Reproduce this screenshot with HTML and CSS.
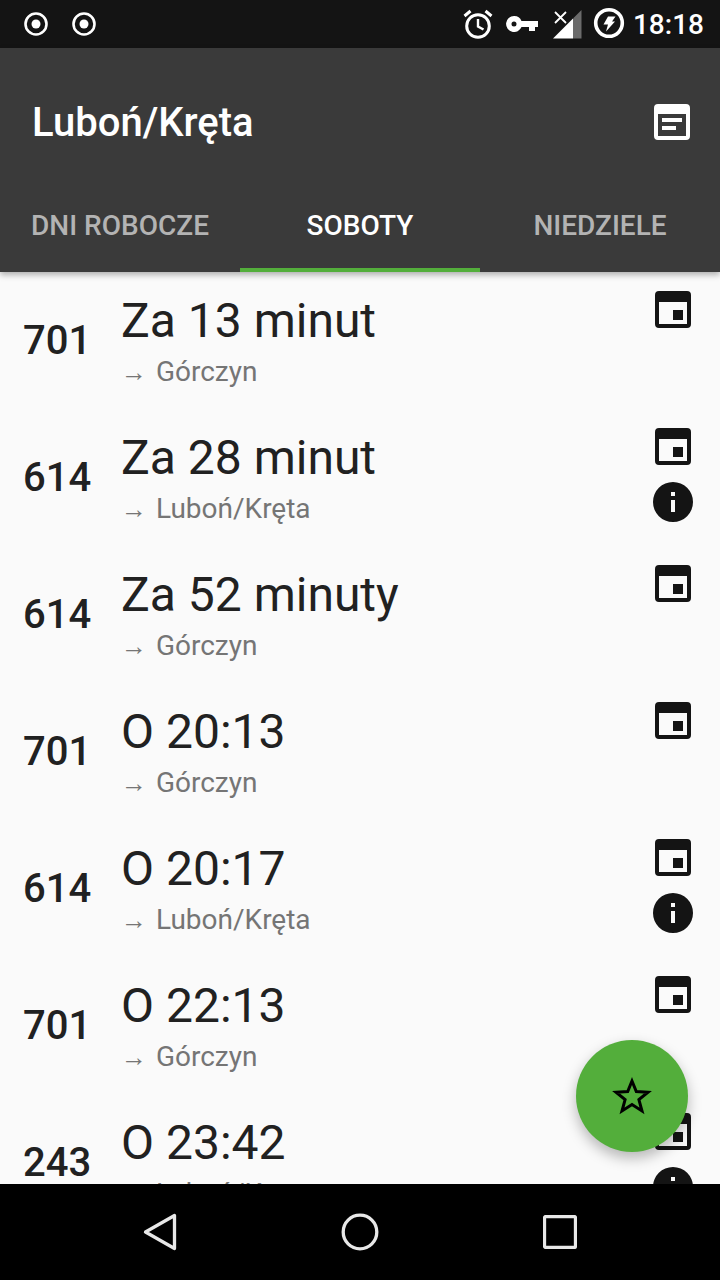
FILE: index.html
```html
<!DOCTYPE html>
<html lang="pl">
<head>
    <meta charset="UTF-8">
    <meta name="viewport" content="width=device-width, initial-scale=1.0">
    <title>Luboń/Kręta</title>
    <link rel="stylesheet" href="styles.css">
</head>
<body>
    <svg class="defs" width="0" height="0">
        <symbol id="cal" viewBox="0 0 36 37">
            <path fill-rule="evenodd" d="M4 0H32A4 4 0 0 1 36 4V33A4 4 0 0 1 32 37H4A4 4 0 0 1 0 33V4A4 4 0 0 1 4 0ZM4 11V33H32V11ZM18 19H28V29H18Z"/>
        </symbol>
        <symbol id="info" viewBox="0 0 40 40">
            <path fill-rule="evenodd" d="M20 0A20 20 0 1 1 20 40A20 20 0 1 1 20 0ZM18 10V14H22V10ZM18 18V30H22V18Z"/>
        </symbol>
        <symbol id="dot" viewBox="0 0 24 24">
            <circle cx="12" cy="12" r="10.5" fill="none" stroke="#fff" stroke-width="2.6"/>
            <circle cx="12" cy="12" r="4.5" fill="#fff"/>
        </symbol>
    </svg>

    <div class="screen">
        <!-- status bar -->
        <div class="status">
            <div class="status-left">
                <svg width="24" height="24"><use href="#dot"/></svg>
                <svg width="24" height="24"><use href="#dot"/></svg>
            </div>
            <div class="status-right">
                <svg class="st-alarm" width="30" height="30" viewBox="0 0 30 30">
                    <circle cx="15" cy="17" r="11.300" fill="none" stroke="#fff" stroke-width="3"/>
                    <path d="M15 10V17.500L20.500 20.500" fill="none" stroke="#fff" stroke-width="2.400"/>
                    <path d="M1.500 7L7.500 2M28.500 7L22.500 2" stroke="#fff" stroke-width="3"/>
                </svg>
                <svg class="st-key" width="32" height="16" viewBox="0 0 32 16">
                    <path fill="#fff" fill-rule="evenodd" d="M8 0A8 8 0 0 1 15.500 5H32V11H29V15H23V11H15.500A8 8 0 1 1 8 0ZM8 5.500A2.500 2.500 0 1 0 8 10.500A2.500 2.500 0 1 0 8 5.500Z"/>
                </svg>
                <svg class="st-signal" width="29" height="29" viewBox="0 0 29 29">
                    <path fill="#fff" d="M0 28.500L20 8.500V28.500Z"/>
                    <path fill="#6b6b6b" d="M20 8.500L28.500 0V28.500H20Z"/>
                    <path d="M2 2L13 13M13 2L2 13" stroke="#fff" stroke-width="1.800"/>
                </svg>
                <svg class="st-bolt" width="32" height="32" viewBox="0 0 32 32">
                    <circle cx="16" cy="16" r="13.300" fill="none" stroke="#fff" stroke-width="3.600"/>
                    <path fill="#fff" d="M15 9.500H22.500L19 14.500H22L13 24.500L15 17.500H10.500Z"/>
                </svg>
                <span class="clock">18:18</span>
            </div>
        </div>

        <!-- app bar -->
        <header class="appbar">
            <div class="toolbar">
                <h1>Luboń/Kręta</h1>
                <svg width="36" height="36" viewBox="0 0 36 36">
                    <path fill="#fff" fill-rule="evenodd" d="M4 0H32A4 4 0 0 1 36 4V32A4 4 0 0 1 32 36H4A4 4 0 0 1 0 32V4A4 4 0 0 1 4 0ZM4 10V32H32V10ZM8 14H28V18H8ZM8 22H22V26H8Z"/>
                </svg>
            </div>
            <nav class="tabs">
                <div class="tab">DNI ROBOCZE</div>
                <div class="tab active">SOBOTY</div>
                <div class="tab">NIEDZIELE</div>
            </nav>
        </header>

        <!-- departures -->
        <main class="list">
            <div class="row">
                <div class="line">701</div>
                <div class="info">
                    <div class="when">Za 13 minut</div>
                    <div class="dest"><span class="arrow">→</span> Górczyn</div>
                </div>
                <div class="icons">
                    <svg class="ic-cal"><use href="#cal"/></svg>
                </div>
            </div>
            <div class="row">
                <div class="line">614</div>
                <div class="info">
                    <div class="when">Za 28 minut</div>
                    <div class="dest"><span class="arrow">→</span> Luboń/Kręta</div>
                </div>
                <div class="icons">
                    <svg class="ic-cal"><use href="#cal"/></svg>
                    <svg class="ic-info"><use href="#info"/></svg>
                </div>
            </div>
            <div class="row">
                <div class="line">614</div>
                <div class="info">
                    <div class="when">Za 52 minuty</div>
                    <div class="dest"><span class="arrow">→</span> Górczyn</div>
                </div>
                <div class="icons">
                    <svg class="ic-cal"><use href="#cal"/></svg>
                </div>
            </div>
            <div class="row">
                <div class="line">701</div>
                <div class="info">
                    <div class="when">O 20:13</div>
                    <div class="dest"><span class="arrow">→</span> Górczyn</div>
                </div>
                <div class="icons">
                    <svg class="ic-cal"><use href="#cal"/></svg>
                </div>
            </div>
            <div class="row">
                <div class="line">614</div>
                <div class="info">
                    <div class="when">O 20:17</div>
                    <div class="dest"><span class="arrow">→</span> Luboń/Kręta</div>
                </div>
                <div class="icons">
                    <svg class="ic-cal"><use href="#cal"/></svg>
                    <svg class="ic-info"><use href="#info"/></svg>
                </div>
            </div>
            <div class="row">
                <div class="line">701</div>
                <div class="info">
                    <div class="when">O 22:13</div>
                    <div class="dest"><span class="arrow">→</span> Górczyn</div>
                </div>
                <div class="icons">
                    <svg class="ic-cal"><use href="#cal"/></svg>
                </div>
            </div>
            <div class="row">
                <div class="line">243</div>
                <div class="info">
                    <div class="when">O 23:42</div>
                    <div class="dest"><span class="arrow">→</span> Luboń/Kręta</div>
                </div>
                <div class="icons">
                    <svg class="ic-cal"><use href="#cal"/></svg>
                    <svg class="ic-info"><use href="#info"/></svg>
                </div>
            </div>

            <button class="fab">
                <svg width="40" height="38" viewBox="0 0 40 38">
                    <path fill="none" stroke="#000" stroke-width="3" d="M20 4L24.300 14.500L36 15.200L26.900 22.600L30 34L20 27.600L10 34L13.100 22.600L4 15.200L15.700 14.500Z"/>
                </svg>
            </button>
        </main>

        <!-- nav bar -->
        <footer class="navbar">
            <svg width="36" height="38" viewBox="0 0 36 38">
                <path fill="none" stroke="#e8e8e8" stroke-width="3.300" stroke-linejoin="round" d="M32.500 2.500V35.500L3.500 19Z"/>
            </svg>
            <svg width="38" height="38" viewBox="0 0 38 38">
                <circle cx="19" cy="19" r="16.800" fill="none" stroke="#e8e8e8" stroke-width="3.300"/>
            </svg>
            <svg width="34" height="34" viewBox="0 0 34 34">
                <rect x="1.500" y="1.500" width="31" height="31" rx="1.500" fill="none" stroke="#e8e8e8" stroke-width="3.300"/>
            </svg>
        </footer>
    </div>
</body>
</html>
```

FILE: styles.css
```css
body {
    margin: 0;
    font-family: Roboto, "Noto Sans", sans-serif;
    background-color: #fafafa;
}
.defs {
    position: absolute;
}
.screen {
    display: flex;
    flex-direction: column;
    width: 720px;
    height: 1280px;
    overflow: hidden;
}

/* status bar */
.status {
    display: flex;
    justify-content: space-between;
    align-items: center;
    flex: none;
    height: 48px;
    padding: 0 16px 0 24px;
    background-color: #141414;
    color: #fff;
}
.status-left {
    display: flex;
    gap: 24px;
}
.status-right {
    display: flex;
    align-items: center;
}
.status-right svg {
    display: block;
}
.st-key {
    margin-left: 13px;
}
.st-signal {
    margin-left: 15px;
}
.st-bolt {
    margin-left: 11px;
    margin-bottom: 2px;
}
.clock {
    margin-left: 8px;
    font-size: 28px;
    font-weight: 500;
}

/* app bar */
.appbar {
    position: relative;
    z-index: 1;
    flex: none;
    background-color: #3a3a3a;
    box-shadow: 0 3px 6px rgba(0, 0, 0, 0.3);
}
.toolbar {
    display: flex;
    justify-content: space-between;
    align-items: center;
    height: 128px;
    padding: 20px 30px 0 32px;
    box-sizing: border-box;
}
h1 {
    margin: 0;
    font-size: 40px;
    font-weight: 500;
    color: #fff;
}
.tabs {
    display: flex;
    height: 96px;
}
.tab {
    display: flex;
    justify-content: center;
    align-items: center;
    flex: 1;
    box-sizing: border-box;
    padding-top: 6px;
    border-bottom: 4px solid transparent;
    font-size: 28px;
    font-weight: 500;
    color: #b3b3b3;
}
.tab.active {
    border-bottom-color: #53ae3b;
    color: #fff;
}

/* departures */
.list {
    position: relative;
    flex: 1;
    overflow: hidden;
    background-color: #fafafa;
}
.row {
    display: flex;
    height: 137px;
    color: #212121;
}
.line {
    flex: none;
    width: 121px;
    padding: 43px 0 0 23px;
    box-sizing: border-box;
    font-size: 40px;
    font-weight: 500;
    line-height: 52px;
}
.info {
    flex: 1;
    padding-top: 18px;
}
.when {
    font-size: 48px;
    line-height: 62px;
}
.dest {
    font-size: 28px;
    line-height: 38px;
    margin-top: 1px;
    color: #757575;
}
.arrow {
    display: inline-block;
    width: 28px;
    font-size: 26px;
}
.icons {
    display: flex;
    flex-direction: column;
    align-items: center;
    flex: none;
    width: 40px;
    margin-right: 27px;
    padding-top: 19px;
    fill: #141414;
}
.ic-cal {
    width: 36px;
    height: 37px;
}
.ic-info {
    width: 40px;
    height: 40px;
    margin-top: 17px;
}
.fab {
    position: absolute;
    right: 32px;
    bottom: 32px;
    display: flex;
    justify-content: center;
    align-items: center;
    width: 112px;
    height: 112px;
    padding: 0;
    border: none;
    border-radius: 50%;
    background-color: #53ae3b;
    box-shadow: 0 6px 14px rgba(0, 0, 0, 0.28);
}

/* nav bar */
.navbar {
    position: relative;
    z-index: 1;
    display: grid;
    grid-template-columns: repeat(3, 200px);
    justify-content: center;
    justify-items: center;
    align-items: center;
    flex: none;
    height: 96px;
    background-color: #000;
}
```
